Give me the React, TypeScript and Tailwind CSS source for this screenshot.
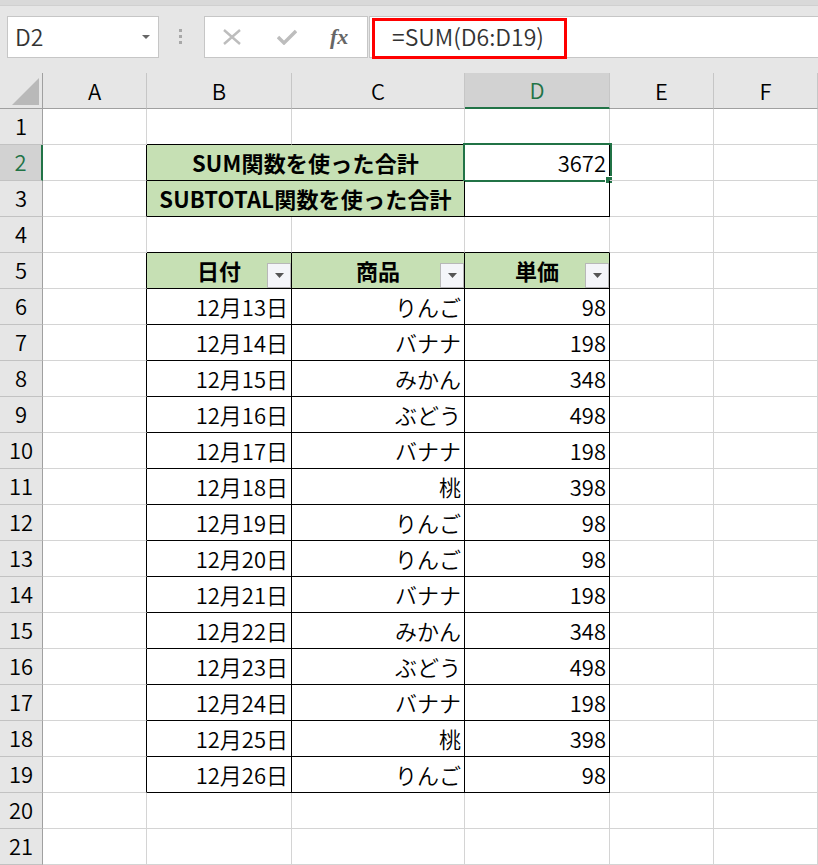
import React from "react";

const COLS = ["A", "B", "C", "D", "E", "F"];
const ROWS = Array.from({ length: 21 }, (_, i) => i + 1);

const items: [string, string, string][] = [
  ["12月13日", "りんご", "98"],
  ["12月14日", "バナナ", "198"],
  ["12月15日", "みかん", "348"],
  ["12月16日", "ぶどう", "498"],
  ["12月17日", "バナナ", "198"],
  ["12月18日", "桃", "398"],
  ["12月19日", "りんご", "98"],
  ["12月20日", "りんご", "98"],
  ["12月21日", "バナナ", "198"],
  ["12月22日", "みかん", "348"],
  ["12月23日", "ぶどう", "498"],
  ["12月24日", "バナナ", "198"],
  ["12月25日", "桃", "398"],
  ["12月26日", "りんご", "98"],
];

// c: 1 = A ... 6 = F
const inTable = (r: number, c: number) =>
  c >= 2 && c <= 4 && ((r >= 2 && r <= 3) || (r >= 5 && r <= 19));

const FilterButton = () => (
  <span className="absolute right-0 bottom-0 flex h-[25px] w-[24px] items-center justify-center border border-[#b8b8b8] bg-[#f4f5f9]">
    <svg width="9" height="5" viewBox="0 0 9 5">
      <path d="M0 0h9L4.5 5z" fill="#555" />
    </svg>
  </span>
);

const Cell = ({
  r,
  c,
  span,
  children,
  className = "",
}: {
  r: number;
  c: number;
  span?: boolean;
  children?: React.ReactNode;
  className?: string;
}) => {
  const last = span ? c + 1 : c;
  const rightBlack = inTable(r, last) || inTable(r, last + 1);
  const bottomBlack = inTable(r, c) || inTable(r + 1, c);
  return (
    <div
      className={`relative flex h-[36px] items-center border-r border-b ${
        rightBlack ? "border-r-black" : "border-r-[#d4d4d4]"
      } ${bottomBlack ? "border-b-black" : "border-b-[#d4d4d4]"} ${
        span ? "col-span-2" : ""
      } ${className}`}
    >
      {children}
    </div>
  );
};

const renderRow = (r: number) => {
  const cells: React.ReactNode[] = [];
  const selected = r === 2;
  cells.push(
    <div
      key={`h-${r}`}
      className={`flex h-[36px] items-center justify-center border-b border-b-[#c2c2c2] pb-[3px] ${
        selected
          ? "border-r-2 border-r-[#217346] bg-[#d2d2d2] text-[#217346]"
          : "border-r border-r-[#a0a0a0] bg-[#e6e6e6] text-black"
      }`}
    >
      {r}
    </div>
  );

  cells.push(<Cell key={`${r}-A`} r={r} c={1} />);

  if (r === 2 || r === 3) {
    cells.push(
      <Cell
        key={`${r}-B`}
        r={r}
        c={2}
        span
        className="justify-center bg-[#c6e0b4] pb-[2px] font-bold tracking-[0.2px]"
      >
        {r === 2 ? "SUM関数を使った合計" : "SUBTOTAL関数を使った合計"}
      </Cell>
    );
    cells.push(
      <Cell key={`${r}-D`} r={r} c={4} className="justify-end pr-[3px] pb-[1px]">
        {r === 2 ? "3672" : ""}
        {r === 2 && (
          <>
            <span className="pointer-events-none absolute -top-[2px] -left-[2px] h-[39px] w-[149px] border-2 border-[#217346]" />
            <span className="absolute top-[31px] left-[140px] h-[8px] w-[8px] border border-white bg-[#217346]" />
          </>
        )}
      </Cell>
    );
  } else if (r === 5) {
    ["日付", "商品", "単価"].forEach((t, i) =>
      cells.push(
        <Cell
          key={`${r}-${i}`}
          r={r}
          c={i + 2}
          className="justify-center bg-[#c6e0b4] pb-[2px] font-bold"
        >
          {t}
          <FilterButton />
        </Cell>
      )
    );
  } else if (r >= 6 && r <= 19) {
    const row = items[r - 6];
    row.forEach((t, i) =>
      cells.push(
        <Cell
          key={`${r}-${i}`}
          r={r}
          c={i + 2}
          className="justify-end pr-[3px] pb-[1px]"
        >
          {t}
        </Cell>
      )
    );
  } else {
    [2, 3, 4].forEach((c) => cells.push(<Cell key={`${r}-${c}`} r={r} c={c} />));
  }

  cells.push(<Cell key={`${r}-E`} r={r} c={5} />);
  cells.push(<Cell key={`${r}-F`} r={r} c={6} />);
  return cells;
};

export default function App() {
  return (
    <div className="relative h-[865px] w-[818px] overflow-hidden bg-white font-['Noto_Sans_CJK_JP','Noto_Sans',sans-serif] text-[22px] leading-none font-[350] text-black">
      {/* toolbar */}
      <div className="h-[73px] bg-[#e6e6e6]">
        <div className="h-[6px] border-b border-b-[#d0d0d0] bg-[#d9d9d9]" />
        <div className="flex items-start pt-[10px]">
          <div className="ml-[7px] flex h-[42px] w-[152px] items-center justify-between border border-[#c6c6c6] bg-white pr-[8px] pl-[7px] text-[23px] text-[#333]">
            <span className="pb-[1px]">D2</span>
            <svg width="8" height="4" viewBox="0 0 8 4">
              <path d="M0 0h8L4 4z" fill="#666" />
            </svg>
          </div>
          <div className="mt-[13px] ml-[20px] flex w-[3px] flex-col gap-[3px]">
            <span className="h-[3px] w-[3px] bg-[#a8a8a8]" />
            <span className="h-[3px] w-[3px] bg-[#a8a8a8]" />
            <span className="h-[3px] w-[3px] bg-[#a8a8a8]" />
          </div>
          <div className="ml-[22px] flex h-[42px] w-[164px] items-center border border-[#c6c6c6] bg-white">
            <svg className="ml-[17px]" width="20" height="16" viewBox="0 0 20 16">
              <path d="M2 1l16 14M18 1L2 15" stroke="#bdbdbd" strokeWidth="2.4" fill="none" />
            </svg>
            <svg className="ml-[35px]" width="20" height="16" viewBox="0 0 20 16">
              <path d="M1 8l6 6L19 2" stroke="#bdbdbd" strokeWidth="3.4" fill="none" />
            </svg>
            <span className="ml-[33px] font-['Liberation_Serif',serif] text-[22px] leading-[22px] font-bold text-[#666] italic">
              fx
            </span>
          </div>
          <div className="ml-[1px] flex h-[42px] flex-1 items-center border-y border-l border-[#c6c6c6] bg-white pb-[1px] pl-[22px] text-[23px] text-[#333]">
            =SUM(D6:D19)
          </div>
        </div>
      </div>
      <span className="absolute top-[18px] left-[372px] h-[41px] w-[195px] border-[3px] border-[#ff0000]" />

      {/* sheet */}
      <div className="grid grid-cols-[43px_104px_145px_173px_145px_104px_104px]">
        <div className="flex h-[36px] items-end justify-end border-r border-b border-r-[#a0a0a0] border-b-[#a0a0a0] bg-[#e6e6e6] pr-[3px] pb-[3px]">
          <svg width="27" height="27" viewBox="0 0 27 27">
            <path d="M27 0v27H0z" fill="#b9b9b9" />
          </svg>
        </div>
        {COLS.map((col) => (
          <div
            key={col}
            className={`flex h-[36px] items-center justify-center border-r border-r-[#c6c6c6] pb-[2px] ${
              col === "D"
                ? "border-b-2 border-b-[#217346] bg-[#d2d2d2] text-[#217346]"
                : "border-b border-b-[#a0a0a0] bg-[#e6e6e6]"
            }`}
          >
            {col}
          </div>
        ))}
        {ROWS.map((r) => renderRow(r))}
      </div>
    </div>
  );
}
